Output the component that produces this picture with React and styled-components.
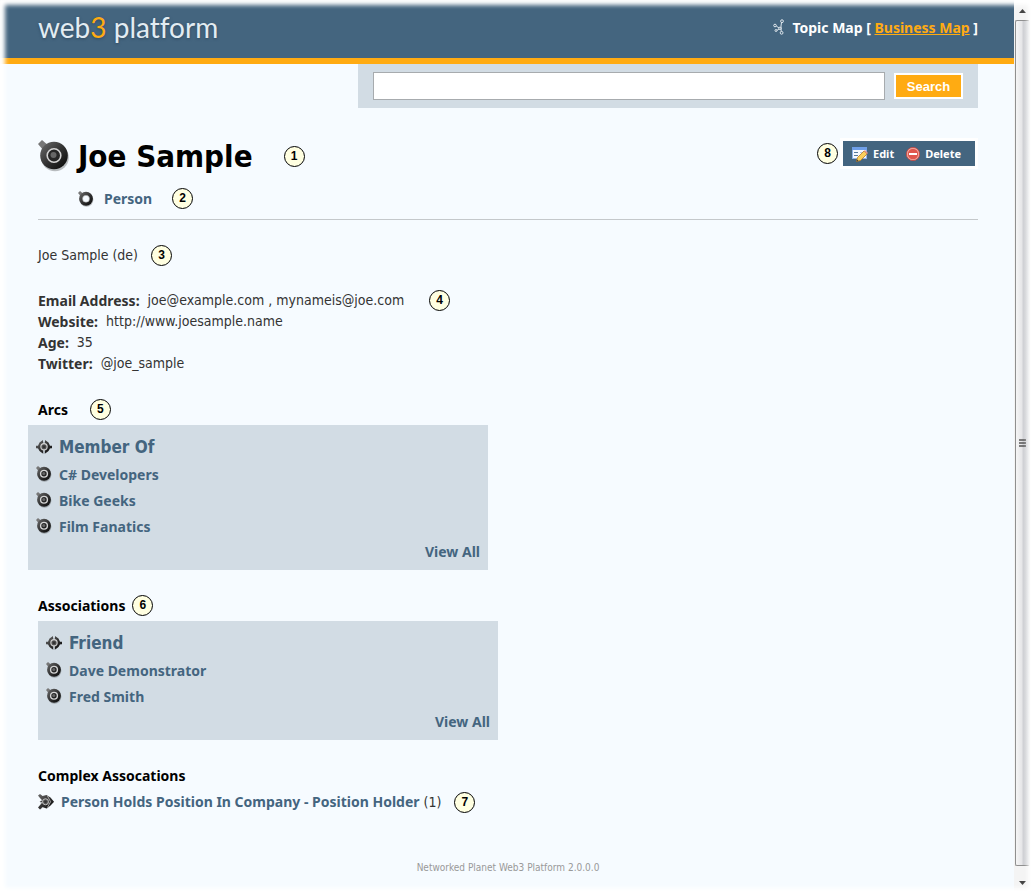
import React, { useId } from "react";
import styled, { createGlobalStyle } from "styled-components";

const textFont = `"DejaVu Sans Condensed", "DejaVu Sans", Tahoma, sans-serif`;
const boldFont = `"Noto Sans", Tahoma, sans-serif`;

const GlobalStyle = createGlobalStyle`
  *, *::before, *::after { box-sizing: border-box; }
  body {
    margin: 0;
    background: #ffffff;
    color: #333333;
    font-family: ${textFont};
    font-size: 14px;
    font-stretch: condensed;
    line-height: 21px;
  }
`;

const Frame = styled.div`
  position: relative;
  display: flex;
  min-height: 100vh;
  background: #f6fbff;

  &::after {
    content: "";
    position: absolute;
    inset: 0;
    pointer-events: none;
    box-shadow: inset 0 0 4px 5px #ffffff;
  }
`;

const Page = styled.div`
  flex: 1;
  min-width: 0;
  display: flex;
  flex-direction: column;
`;

const Header = styled.header`
  display: flex;
  justify-content: space-between;
  height: 64px;
  padding: 8px 36px 0 38px;
  background: #44657f;
  border-bottom: 6px solid #ffab12;
`;

const Logo = styled.a`
  color: #e3ecf2;
  font-family: Lato, sans-serif;
  font-size: 28px;
  font-weight: 400;
  font-variant-ligatures: none;
  line-height: 39px;
  text-decoration: none;
  text-shadow: 0 1px 3px #2f4a60;
`;

const LogoAccent = styled.span`
  color: #ffab12;
`;

const MapNav = styled.nav`
  display: flex;
  align-items: center;
  height: 38px;
  color: #ffffff;
  font-family: ${boldFont};
  font-weight: bold;
  white-space: pre;

  svg { margin-right: 7px; }
`;

const MapLink = styled.a`
  color: #ffab12;
`;

const Main = styled.main`
  padding: 0 36px 0 38px;
`;

const SearchBar = styled.form`
  display: flex;
  align-items: center;
  gap: 9px;
  width: 66%;
  height: 44px;
  margin-left: auto;
  padding: 0 15px;
  background: #d2dce4;
`;

const SearchInput = styled.input`
  flex: 1;
  min-width: 0;
  height: 28px;
  padding: 0 6px;
  border: 1px solid #a7abae;
  background: #ffffff;
  font: inherit;
`;

const SearchButton = styled.button`
  width: 69px;
  height: 26px;
  padding: 0;
  border: 2px solid #ffffff;
  background: #ffab12;
  color: #ffffff;
  font-family: "Liberation Sans", Arial, sans-serif;
  font-size: 13px;
  font-weight: bold;
`;

const TopicHead = styled.div`
  display: flex;
  justify-content: space-between;
  align-items: flex-start;
  margin-top: 30px;
`;

const TitleRow = styled.div`
  display: flex;
  align-items: center;
  height: 36px;
`;

const Title = styled.h1`
  margin: 0 0 0 8px;
  color: #000000;
  font-size: 31px;
  line-height: 36px;
`;

const Actions = styled.div`
  display: flex;
  align-items: center;
  gap: 2px;
`;

const ActionBar = styled.div`
  display: flex;
  gap: 12px;
  height: 31px;
  padding: 0 14px 0 9px;
  border: 3px solid #ffffff;
  background: #44657f;
`;

const ActionButton = styled.button`
  display: flex;
  align-items: center;
  gap: 5px;
  padding: 0;
  border: 0;
  background: none;
  color: #ffffff;
  font-family: ${boldFont};
  font-size: 11px;
  font-weight: bold;
`;

const TypeRow = styled.div`
  display: flex;
  align-items: center;
  gap: 10px;
  height: 32px;
  margin-top: 14px;
  padding: 0 0 10px 40px;
  border-bottom: 1px solid #c4c8cb;
`;

const TopicLink = styled.a`
  color: #44657f;
  font-family: ${boldFont};
  font-weight: bold;
  text-decoration: none;
`;

const NameLine = styled.div`
  display: flex;
  margin-top: 25px;
`;

const DetailBlock = styled.div`
  display: flex;
  align-items: flex-start;
  margin-top: 24px;
`;

const Details = styled.dl`
  margin: 0;
`;

const Detail = styled.div`
  display: flex;
  gap: 8px;
`;

const Term = styled.dt`
  font-family: ${boldFont};
  font-weight: bold;
`;

const Value = styled.dd`
  margin: 0;
`;

const Section = styled.section`
  margin-top: 25px;
`;

const SectionHead = styled.div`
  display: flex;
  align-items: center;
  height: 21px;
  margin-bottom: 5px;
`;

const SectionTitle = styled.h2`
  margin: 0;
  color: #000000;
  font-family: ${boldFont};
  font-size: 14px;
`;

const Panel = styled.div`
  width: 460px;
  max-width: 100%;
  margin-left: ${(p) => (p.$outdent ? "-10px" : "0")};
  padding: 8px 8px 5px;
  background: #d2dce4;
`;

const PanelTitle = styled.h3`
  display: flex;
  align-items: center;
  gap: 7px;
  height: 28px;
  margin: 0;
  font-size: 17px;
`;

const PanelTitleLink = styled(TopicLink)`
  font-family: ${textFont};
`;

const LinkList = styled.ul`
  margin: 0;
  padding: 0;
  list-style: none;
`;

const LinkRow = styled.li`
  display: flex;
  align-items: center;
  gap: 7px;
  height: 26px;
`;

const PanelFooter = styled.div`
  line-height: 26px;
  text-align: right;
`;

const ComplexRow = styled.div`
  display: flex;
  align-items: center;
`;

const ComplexText = styled.span`
  margin-left: 7px;
`;

const Footer = styled.footer`
  margin-top: 44px;
  padding: 0 36px 8px 38px;
  color: #999999;
  font-size: 10px;
  text-align: center;
`;

const Callout = styled.span`
  flex: none;
  width: 21px;
  height: 21px;
  margin-left: ${(p) => p.$gap || 0}px;
  border: 1px solid #000000;
  border-radius: 50%;
  background: #ffffe1;
  color: #000000;
  font-family: "Liberation Sans", Arial, sans-serif;
  font-size: 12px;
  font-weight: bold;
  line-height: 18px;
  text-align: center;
`;

const Scrollbar = styled.div`
  display: flex;
  flex-direction: column;
  flex: none;
  width: 19px;
  padding-right: 3px;
  background: #f4f4f4;
`;

const ScrollArrow = styled.div`
  display: flex;
  justify-content: center;
  align-items: ${(p) => (p.$down ? "center" : "flex-end")};
  height: ${(p) => (p.$down ? "27px" : "20px")};
  padding: ${(p) => (p.$down ? "6px 0 0" : "0 0 7px")};
`;

const Thumb = styled.div`
  display: flex;
  flex: 1;
  align-items: center;
  justify-content: center;
  margin-left: 1px;
  border: 1px solid #8f8f8f;
  border-right-color: #dddddd;
  border-radius: 2px;
  background: linear-gradient(to right, #f5f5f5 0, #e6e6e8 45%, #cfd0d4 55%, #dcdde0 100%);
`;

const Glyph = styled.svg`
  display: block;
  flex: none;
`;

function Metal({ id }) {
  return (
    <defs>
      <linearGradient id={id} x1="0" y1="0" x2="1" y2="1">
        <stop offset="0" stopColor="#6d6d6d" />
        <stop offset="0.5" stopColor="#333333" />
        <stop offset="1" stopColor="#050505" />
      </linearGradient>
    </defs>
  );
}

function TopicIcon({ size = 16, hollow }) {
  const id = useId();
  return (
    <Glyph width={size} height={size} viewBox="0 0 32 32" aria-hidden="true">
      <Metal id={id} />
      <circle cx="17" cy="17.5" r="13.8" fill="#000" opacity="0.25" />
      <path d="M0 4 4 0 11 6 6 11Z" fill="#777" />
      <circle cx="16" cy="15.5" r="13.8" fill={`url(#${id})`} />
      {hollow ? (
        <circle cx="16" cy="15.5" r="7" fill="#f6fbff" stroke="#999" strokeWidth="1" />
      ) : (
        <>
          <circle cx="16" cy="15.5" r="6.8" fill="#262626" stroke="#d4d4d4" strokeWidth={size > 16 ? 1.6 : 2.8} />
          <circle cx="15.5" cy="15" r="3" fill="#666" />
        </>
      )}
    </Glyph>
  );
}

function AssociationIcon() {
  const id = useId();
  return (
    <Glyph width="16" height="16" viewBox="0 0 32 32" aria-hidden="true">
      <Metal id={id} />
      <path d="M1 17.5 6 14 10 8 16 5 22 8 26 14 32 17.5 26 21 22 27 16 30 10 27 6 21Z" fill="#000" opacity="0.2" />
      <path d="M0 13.5H4L7 7 14 2V9H18V2L25 7 28 13.5H32V18.5H28L25 24 18 29V22H14V29L7 24 4 18.5H0Z" fill={`url(#${id})`} />
      <circle cx="16" cy="15.5" r="6.3" fill="#555" stroke="#d4d4d4" strokeWidth="2.2" />
      <circle cx="16" cy="15.5" r="3" fill="#333" />
    </Glyph>
  );
}

function ComplexIcon() {
  const id = useId();
  return (
    <Glyph width="16" height="16" viewBox="0 0 32 32" aria-hidden="true">
      <Metal id={id} />
      <path d="M1 5 6 2 10 5 19 4 26 10 32 16 26 22 19 29 10 27 5 31 2 27 7 22 4 17 7 11Z" fill="#000" opacity="0.2" />
      <path d="M0 3 4 0 9 4 17 2 25 7 32 15.5 25 23 17 29 9 26 4 31 0 27 5 21 9 17 3 15 9 13 5 9Z" fill={`url(#${id})`} />
      <circle cx="15" cy="15.5" r="6" fill="#555" stroke="#c4c4c4" strokeWidth="2" />
      <path d="M19 4 25 15.5 19 27" fill="none" stroke="#c8c8c8" strokeWidth="1.6" />
      <circle cx="15" cy="15.5" r="2.6" fill="#333" />
    </Glyph>
  );
}

function MapIcon() {
  return (
    <Glyph width="12" height="16" viewBox="0 0 12 16" fill="none" stroke="#dfe7ed" aria-hidden="true">
      <path d="M8.5 3.5 8 7 8.2 12.5M3.2 7 6 9M3.8 11.5 6 10" />
      <circle cx="9" cy="2.2" r="1.4" />
      <circle cx="2" cy="6.5" r="1.3" />
      <circle cx="7" cy="9.3" r="1.2" />
      <circle cx="3" cy="11.5" r="1" />
      <circle cx="8.6" cy="13.8" r="1.4" />
    </Glyph>
  );
}

function EditIcon() {
  return (
    <Glyph width="16" height="16" viewBox="0 0 16 16" aria-hidden="true">
      <rect x="0.5" y="1.5" width="14" height="11" fill="#f4f8ff" stroke="#8db1e8" />
      <path d="M0 1H15V4H0Z" fill="#6f9fe8" />
      <path d="M2 6.5H6M2 9.5H6" stroke="#55779c" />
      <path d="M8 6.5H13M8 9.5H12" stroke="#b8c9dd" />
      <path d="M4.5 15.5 5.5 11.5 12 5 15 8 8.5 14.5Z" fill="#f9cf5c" stroke="#b87a24" strokeWidth="0.8" />
      <path d="M12 5 15 8 16 7 13 4Z" fill="#e7958b" />
      <path d="M4.5 15.5 5 13.5 6.5 15Z" fill="#333" />
    </Glyph>
  );
}

function DeleteIcon() {
  return (
    <Glyph width="14" height="14" viewBox="0 0 14 14" aria-hidden="true">
      <circle cx="7" cy="7" r="6.6" fill="#f2aaa2" stroke="#c8433b" strokeWidth="0.8" />
      <circle cx="7" cy="7" r="5.2" fill="#e0574e" />
      <rect x="3" y="6" width="8" height="2" fill="#ffffff" />
    </Glyph>
  );
}

function LinkPanel({ title, items, outdent }) {
  return (
    <Panel $outdent={outdent}>
      <PanelTitle>
        <AssociationIcon />
        <PanelTitleLink href="#">{title}</PanelTitleLink>
      </PanelTitle>
      <LinkList>
        {items.map((item) => (
          <LinkRow key={item}>
            <TopicIcon />
            <TopicLink href="#">{item}</TopicLink>
          </LinkRow>
        ))}
      </LinkList>
      <PanelFooter>
        <TopicLink href="#">View All</TopicLink>
      </PanelFooter>
    </Panel>
  );
}

const details = [
  ["Email Address:", "joe@example.com , mynameis@joe.com"],
  ["Website:", "http://www.joesample.name"],
  ["Age:", "35"],
  ["Twitter:", "@joe_sample"],
];

export default function App() {
  return (
    <>
      <GlobalStyle />
      <Frame>
        <Page>
          <Header>
            <Logo href="#">
              web<LogoAccent>3</LogoAccent> platform
            </Logo>
            <MapNav>
              <MapIcon />
              {"Topic Map [ "}
              <MapLink href="#">Business Map</MapLink>
              {" ]"}
            </MapNav>
          </Header>
          <Main>
            <SearchBar onSubmit={(e) => e.preventDefault()}>
              <SearchInput type="text" aria-label="Search" />
              <SearchButton type="submit">Search</SearchButton>
            </SearchBar>

            <TopicHead>
              <TitleRow>
                <TopicIcon size={32} />
                <Title>Joe Sample</Title>
                <Callout $gap={31}>1</Callout>
              </TitleRow>
              <Actions>
                <Callout>8</Callout>
                <ActionBar>
                  <ActionButton type="button">
                    <EditIcon />
                    Edit
                  </ActionButton>
                  <ActionButton type="button">
                    <DeleteIcon />
                    Delete
                  </ActionButton>
                </ActionBar>
              </Actions>
            </TopicHead>
            <TypeRow>
              <TopicIcon hollow />
              <TopicLink href="#">Person</TopicLink>
              <Callout $gap={10}>2</Callout>
            </TypeRow>

            <NameLine>
              Joe Sample (de)
              <Callout $gap={13}>3</Callout>
            </NameLine>

            <DetailBlock>
              <Details>
                {details.map(([term, value]) => (
                  <Detail key={term}>
                    <Term>{term}</Term>
                    <Value>{value}</Value>
                  </Detail>
                ))}
              </Details>
              <Callout $gap={25}>4</Callout>
            </DetailBlock>

            <Section>
              <SectionHead>
                <SectionTitle>Arcs</SectionTitle>
                <Callout $gap={22}>5</Callout>
              </SectionHead>
              <LinkPanel outdent title="Member Of" items={["C# Developers", "Bike Geeks", "Film Fanatics"]} />
            </Section>

            <Section>
              <SectionHead>
                <SectionTitle>Associations</SectionTitle>
                <Callout $gap={7}>6</Callout>
              </SectionHead>
              <LinkPanel title="Friend" items={["Dave Demonstrator", "Fred Smith"]} />
            </Section>

            <Section>
              <SectionHead>
                <SectionTitle>Complex Assocations</SectionTitle>
              </SectionHead>
              <ComplexRow>
                <ComplexIcon />
                <ComplexText>
                  <TopicLink href="#">Person Holds Position In Company - Position Holder</TopicLink> (1)
                </ComplexText>
                <Callout $gap={13}>7</Callout>
              </ComplexRow>
            </Section>
          </Main>
          <Footer>Networked Planet Web3 Platform 2.0.0.0</Footer>
        </Page>
        <Scrollbar aria-hidden="true">
          <ScrollArrow>
            <Glyph width="7" height="4" viewBox="0 0 7 4">
              <path d="M0 4 3.5 0 7 4Z" fill="#444" />
            </Glyph>
          </ScrollArrow>
          <Thumb>
            <Glyph width="7" height="8" viewBox="0 0 7 8">
              <path d="M0 1H7M0 4H7M0 7H7" stroke="#555" strokeWidth="1.4" />
            </Glyph>
          </Thumb>
          <ScrollArrow $down>
            <Glyph width="7" height="4" viewBox="0 0 7 4">
              <path d="M0 0 3.5 4 7 0Z" fill="#444" />
            </Glyph>
          </ScrollArrow>
        </Scrollbar>
      </Frame>
    </>
  );
}
